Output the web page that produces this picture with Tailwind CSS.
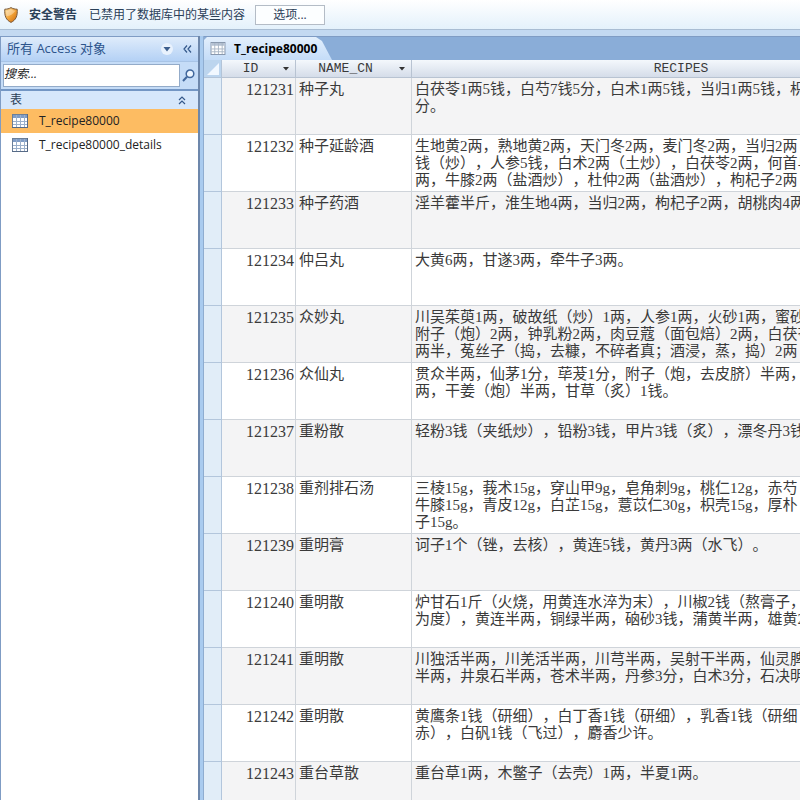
<!DOCTYPE html>
<html lang="zh-CN">
<head>
  <meta charset="UTF-8" />
  <meta name="viewport" content="width=device-width, initial-scale=1.0" />
  <title>T_recipe80000</title>
  <script src="https://cdn.jsdelivr.net/npm/@tailwindcss/browser@4"></script>
</head>
<body class="flex flex-col h-screen overflow-hidden bg-[#c3d9f1] text-[12px] text-[#222] font-['Open_Sans','Noto_Sans_CJK_SC',sans-serif]">
  <!-- Security bar -->
  <header class="flex items-center h-[30px] shrink-0 pl-1 bg-linear-to-b from-white to-[#e4f1fb] border-b border-[#a9bdd3] text-[#2b4058]">
    <svg class="w-[14px] h-[16px]" viewBox="0 0 14 16">
      <defs>
        <linearGradient id="shield" x1="0" y1="0" x2="1" y2="1">
          <stop offset="0" stop-color="#fbe0a0" />
          <stop offset="0.5" stop-color="#f3a53a" />
          <stop offset="1" stop-color="#c9660c" />
        </linearGradient>
      </defs>
      <path d="M7 0.6 C5 1.8 3 2.2 0.8 2.2 C0.3 9 2 13 7 15.4 C12 13 13.7 9 13.2 2.2 C11 2.2 9 1.8 7 0.6 Z" fill="url(#shield)" stroke="#7a5a3c" />
      <path d="M7 2 C5.500 3 4 3.500 2.200 3.700 C2.100 5.500 2.200 7.500 2.700 9 C6 9 9 7 11.500 3.700 C9.500 3.500 8.300 3 7 2 Z" fill="#fff" opacity="0.35" />
    </svg>
    <strong class="ml-[11px]">安全警告</strong>
    <span class="ml-3">已禁用了数据库中的某些内容</span>
    <button class="ml-[10px] w-[70px] h-5 bg-[#fcfeff] border border-[#b4bcc6]">选项...</button>
  </header>

  <main class="flex flex-1 min-h-0 mt-[6px]">
    <!-- Navigation pane -->
    <nav class="flex flex-col w-[198px] shrink-0 bg-white border-t border-l border-[#7f9cc4]">
      <div class="flex items-center h-6 shrink-0 pl-[6px] pr-[6px] bg-linear-to-b from-[#dfecfb] to-[#b4d1f5] text-[#2c548c]">
        <h1 class="flex-1 whitespace-nowrap text-[13px]">所有 Access 对象</h1>
        <button aria-label="筛选" class="flex items-center justify-center w-3 h-3 rounded-full bg-[#e9f2fd]">
          <svg class="w-[8px] h-[5px]" viewBox="0 0 8 5"><path d="M0.5 0 H7.5 L4 4.5 Z" fill="#3d5f8e" /></svg>
        </button>
        <button aria-label="折叠窗格" class="ml-[10px]">
          <svg class="w-[9px] h-[8px]" viewBox="0 0 9 8"><path d="M4 0.5 L1 4 L4 7.5 M8 0.5 L5 4 L8 7.5" fill="none" stroke="#34588a" stroke-width="1.2" /></svg>
        </button>
      </div>
      <div class="flex items-center h-[30px] shrink-0 pl-[2px] pr-[3px] bg-[#c5dcf7] border-t border-b-2 border-t-[#a8c4e6] border-b-[#7396c4]">
        <input type="text" aria-label="搜索" placeholder="搜索..." class="flex-1 min-w-0 h-[23px] pb-1 bg-white border border-[#93abc9] italic placeholder:text-[#222]" />
        <button aria-label="开始搜索" class="ml-[2px]">
          <svg class="w-[13px] h-[13px]" viewBox="0 0 13 13">
            <circle cx="8" cy="4.800" r="3.800" fill="#eef6ff" stroke="#41679c" stroke-width="1.500" />
            <path d="M5 7.800 L1 12" stroke="#41679c" stroke-width="2" />
          </svg>
        </button>
      </div>
      <div class="flex items-center justify-between h-[18px] shrink-0 pl-[9px] pr-3 bg-[#d6e7fb] text-[#2b4058]">
        <h2>表</h2>
        <button aria-label="折叠">
          <svg class="w-[8px] h-[9px]" viewBox="0 0 8 9"><path d="M1 4 L4 1 L7 4 M1 8 L4 5 L7 8" fill="none" stroke="#34588a" stroke-width="1.2" /></svg>
        </button>
      </div>
      <a href="#" class="flex items-center gap-[11px] h-6 shrink-0 pl-[11px] bg-[#fdbc62]">
        <svg class="w-4 h-[14px]" viewBox="0 0 16 14">
          <rect x="0.5" y="0.5" width="15" height="13" fill="#fff" stroke="#6b7f99" />
          <path d="M1 1 H15 V4 H1 Z" fill="#7f9cc6" />
          <path d="M1 7.5 H15 M1 10.5 H15 M4.5 1 V13 M8.5 1 V13 M12.5 1 V13" stroke="#9bb0cb" />
          <path d="M0 13.5 H16 M15.500 0 V14" stroke="#566a86" />
        </svg>
        <span>T_recipe80000</span>
      </a>
      <a href="#" class="flex items-center gap-[11px] h-6 shrink-0 pl-[11px]">
        <svg class="w-4 h-[14px]" viewBox="0 0 16 14">
          <rect x="0.5" y="0.5" width="15" height="13" fill="#fff" stroke="#6b7f99" />
          <path d="M1 1 H15 V4 H1 Z" fill="#7f9cc6" />
          <path d="M1 7.5 H15 M1 10.5 H15 M4.5 1 V13 M8.5 1 V13 M12.5 1 V13" stroke="#9bb0cb" />
          <path d="M0 13.5 H16 M15.500 0 V14" stroke="#566a86" />
        </svg>
        <span>T_recipe80000_details</span>
      </a>
    </nav>

    <!-- Splitter -->
    <div class="w-[6px] shrink-0 bg-[#a9cbef] border-l-2 border-r border-l-[#6d87ab] border-r-[#8fadd0]"></div>

    <!-- Datasheet -->
    <section class="flex flex-col flex-1 min-w-0 overflow-hidden bg-white border-t border-[#7f9cc4]">
      <div class="flex h-[23px] shrink-0 bg-[#8aadd8]">
        <div class="flex items-center w-[128px] pl-[6px] gap-2 bg-linear-to-b from-[#e3effc] to-[#c4dcf8] [clip-path:polygon(0_3px,3px_0,112px_0,118px_4px,128px_100%,0_100%)]">
          <svg class="w-4 h-[13px]" viewBox="0 0 16 14">
            <rect x="0.5" y="0.5" width="15" height="13" fill="#fff" stroke="#8292a8" />
            <path d="M1 1 H15 V4 H1 Z" fill="#b5c2d3" />
            <path d="M1 7.5 H15 M1 10.5 H15 M4.5 1 V13 M8.5 1 V13 M12.5 1 V13" stroke="#a9b5c5" />
          </svg>
          <strong class="text-black">T_recipe80000</strong>
        </div>
      </div>
      <table class="table-fixed w-[746px] border-separate border-spacing-0 text-[15px] leading-[17px] text-[#3a3a3a] font-['Liberation_Serif','Noto_Sans_CJK_SC',serif] [text-spacing-trim:space-all]">
        <colgroup>
          <col class="w-[18px]" />
          <col class="w-[74px]" />
          <col class="w-[116px]" />
          <col class="w-[538px]" />
        </colgroup>
        <thead>
          <tr class="h-[18px] bg-linear-to-b from-[#f4f8fc] to-[#d3dbe8] text-[13px] font-['Liberation_Mono',monospace]">
            <th aria-label="全选" class="p-0 border-r border-b border-[#b3c4d8] bg-[#bcd5ee]">
              <svg class="w-[12px] h-[12px] ml-[3px]" viewBox="0 0 12 12"><path d="M12 0 V12 H0 Z" fill="#f1f8ff" /></svg>
            </th>
            <th class="p-0 border-r border-b border-[#b8c3d2] font-normal">
              <div class="flex items-center pr-[6px]"><span class="flex-1 pr-1">ID</span><svg class="w-[6px] h-[4px]" viewBox="0 0 6 4"><path d="M0 0 H6 L3 3.5 Z" fill="#333" /></svg></div>
            </th>
            <th class="p-0 border-r border-b border-[#b8c3d2] font-normal">
              <div class="flex items-center pr-[6px]"><span class="flex-1 pr-1">NAME_CN</span><svg class="w-[6px] h-[4px]" viewBox="0 0 6 4"><path d="M0 0 H6 L3 3.5 Z" fill="#333" /></svg></div>
            </th>
            <th class="p-0 border-b border-[#b8c3d2] font-normal">RECIPES</th>
          </tr>
        </thead>
        <tbody id="rows"></tbody>
      </table>
    </section>
  </main>

  <script>
    const recipes = [
      { id: 121231, name: '种子丸', text: '白茯苓1两5钱，白芍7钱5分，白术1两5钱，当归1两5钱，枳\n分。' },
      { id: 121232, name: '种子延龄酒', text: '生地黄2两，熟地黄2两，天门冬2两，麦门冬2两，当归2两\n钱（炒），人参5钱，白术2两（土炒），白茯苓2两，何首乌\n两，牛膝2两（盐酒炒），杜仲2两（盐酒炒），枸杞子2两' },
      { id: 121233, name: '种子药酒', text: '淫羊藿半斤，淮生地4两，当归2两，枸杞子2两，胡桃肉4两' },
      { id: 121234, name: '仲吕丸', text: '大黄6两，甘遂3两，牵牛子3两。' },
      { id: 121235, name: '众妙丸', text: '川吴茱萸1两，破故纸（炒）1两，人参1两，火砂1两，蜜砂\n附子（炮）2两，钟乳粉2两，肉豆蔻（面包焙）2两，白茯苓\n两半，菟丝子（捣，去糠，不碎者真；酒浸，蒸，捣）2两' },
      { id: 121236, name: '众仙丸', text: '贯众半两，仙茅1分，荜茇1分，附子（炮，去皮脐）半两，\n两，干姜（炮）半两，甘草（炙）1钱。' },
      { id: 121237, name: '重粉散', text: '轻粉3钱（夹纸炒），铅粉3钱，甲片3钱（炙），漂冬丹3钱' },
      { id: 121238, name: '重剂排石汤', text: '三棱15g，莪术15g，穿山甲9g，皂角刺9g，桃仁12g，赤芍\n牛膝15g，青皮12g，白芷15g，薏苡仁30g，枳壳15g，厚朴\n子15g。' },
      { id: 121239, name: '重明膏', text: '诃子1个（锉，去核），黄连5钱，黄丹3两（水飞）。' },
      { id: 121240, name: '重明散', text: '炉甘石1斤（火烧，用黄连水淬为末），川椒2钱（熬膏子，\n为度），黄连半两，铜绿半两，硇砂3钱，蒲黄半两，雄黄2' },
      { id: 121241, name: '重明散', text: '川独活半两，川羌活半两，川芎半两，吴射干半两，仙灵脾\n半两，井泉石半两，苍术半两，丹参3分，白术3分，石决明' },
      { id: 121242, name: '重明散', text: '黄鹰条1钱（研细），白丁香1钱（研细），乳香1钱（研细\n赤），白矾1钱（飞过），麝香少许。' },
      { id: 121243, name: '重台草散', text: '重台草1两，木鳖子（去壳）1两，半夏1两。' },
    ];

    document.getElementById('rows').innerHTML = recipes.map(r => `
      <tr class="h-[57px] align-top odd:bg-[#f4f4f5] even:bg-white">
        <td class="bg-[#e1edf8] border-r border-b border-[#b3c6dc]"></td>
        <td class="pt-[3px] pr-px border-r border-b border-[#cfd4da] text-[16px] text-right">${r.id}</td>
        <td class="pt-[3px] pl-[3px] border-r border-b border-[#cfd4da]">${r.name}</td>
        <td class="pt-[3px] pl-[3px] border-b border-[#cfd4da] whitespace-pre overflow-hidden">${r.text}</td>
      </tr>`).join('');
  </script>
</body>
</html>
